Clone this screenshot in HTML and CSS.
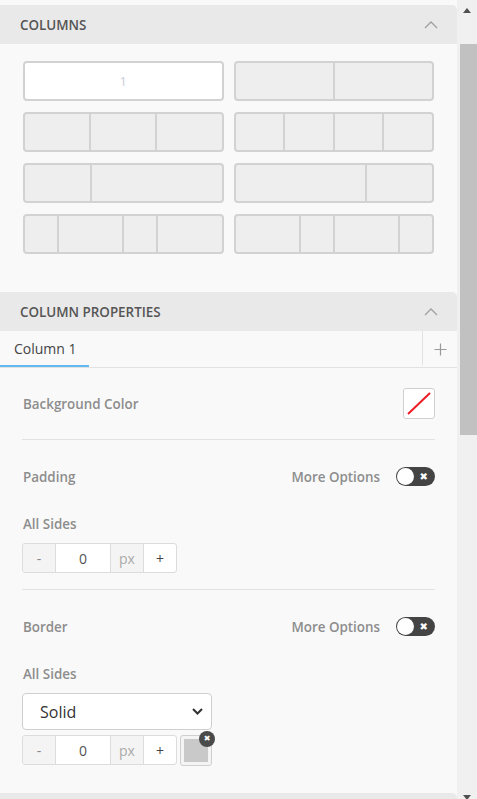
FILE: index.html
```html
<!DOCTYPE html>
<html>
<head>
<meta charset="utf-8">
<link rel="stylesheet" href="styles.css">
</head>
<body>
<div class="panel">
  <div class="sec-head">
    <span>COLUMNS</span>
    <svg class="chev" width="14" height="8" viewBox="0 0 14 8"><polyline points="1,7 7,1 13,7" fill="none" stroke="#a0a0a0" stroke-width="1.3"/></svg>
  </div>
  <div class="layouts">
    <div class="lay lay-one"><div class="cell" style="flex:1">1</div></div>
    <div class="lay"><div class="cell" style="flex:1"></div><div class="cell" style="flex:1"></div></div>
    <div class="lay"><div class="cell" style="flex:1"></div><div class="cell" style="flex:1"></div><div class="cell" style="flex:1"></div></div>
    <div class="lay"><div class="cell" style="flex:1"></div><div class="cell" style="flex:1"></div><div class="cell" style="flex:1"></div><div class="cell" style="flex:1"></div></div>
    <div class="lay"><div class="cell" style="flex:1"></div><div class="cell" style="flex:2"></div></div>
    <div class="lay"><div class="cell" style="flex:2"></div><div class="cell" style="flex:1"></div></div>
    <div class="lay"><div class="cell" style="flex:1"></div><div class="cell" style="flex:2"></div><div class="cell" style="flex:1"></div><div class="cell" style="flex:2"></div></div>
    <div class="lay"><div class="cell" style="flex:2"></div><div class="cell" style="flex:1"></div><div class="cell" style="flex:2"></div><div class="cell" style="flex:1"></div></div>
  </div>

  <div class="sec-head">
    <span>COLUMN PROPERTIES</span>
    <svg class="chev" width="14" height="8" viewBox="0 0 14 8"><polyline points="1,7 7,1 13,7" fill="none" stroke="#a0a0a0" stroke-width="1.3"/></svg>
  </div>
  <div class="tabs">
    <div class="tab active">Column 1</div>
    <div class="tab-fill"></div>
    <div class="tab-add">
      <svg width="13" height="13" viewBox="0 0 13 13"><path d="M6.5 0.5v12M0.5 6.5h12" stroke="#9a9a9a" stroke-width="1.2" fill="none"/></svg>
    </div>
  </div>

  <div class="props">
    <div class="row bg-row">
      <span class="label">Background Color</span>
      <div class="swatch-none">
        <svg width="30" height="29" viewBox="0 0 30 29"><line x1="4" y1="25" x2="26" y2="4" stroke="#ec1c24" stroke-width="2"/></svg>
      </div>
    </div>

    <div class="group">
      <div class="row head-row">
        <span class="label">Padding</span>
        <div class="more">
          <span class="label">More Options</span>
          <div class="toggle"><span class="knob"></span><span class="tx">&#x2716;</span></div>
        </div>
      </div>
      <div class="sub-label label">All Sides</div>
      <div class="numrow">
        <div class="num">
          <div class="nb minus">-</div>
          <div class="nv">0</div>
          <div class="nb unit">px</div>
          <div class="nb plus">+</div>
        </div>
      </div>
    </div>

    <div class="group last">
      <div class="row head-row">
        <span class="label">Border</span>
        <div class="more">
          <span class="label">More Options</span>
          <div class="toggle"><span class="knob"></span><span class="tx">&#x2716;</span></div>
        </div>
      </div>
      <div class="sub-label label">All Sides</div>
      <div class="select">
        <span>Solid</span>
        <svg width="11" height="7" viewBox="0 0 11 7"><polyline points="1,1 5.5,5.5 10,1" fill="none" stroke="#333" stroke-width="2"/></svg>
      </div>
      <div class="numrow tight">
        <div class="num">
          <div class="nb minus">-</div>
          <div class="nv">0</div>
          <div class="nb unit">px</div>
          <div class="nb plus">+</div>
        </div>
        <div class="color-sw">
          <div class="inner"></div>
          <div class="badge">&#x2716;</div>
        </div>
      </div>
    </div>
  </div>
  <div class="sec-head bottom"></div>
</div>
<div class="scrollbar">
  <div class="arrow up"></div>
  <div class="thumb"></div>
  <div class="track"></div>
  <div class="arrow down"></div>
</div>
</body>
</html>
```

FILE: styles.css
```css
html, body {
  margin: 0;
  padding: 0;
  height: 799px;
  overflow: hidden;
}
body {
  display: flex;
  font-family: "Open Sans", "Noto Sans", sans-serif;
  background: #f9f9f9;
}
.panel {
  width: 457px;
  flex: none;
  background: #f9f9f9;
  padding-top: 5px;
  box-sizing: border-box;
  height: 799px;
  overflow: hidden;
}
.sec-head {
  height: 39px;
  background: #e9e9e9;
  border-top-right-radius: 5px;
  display: flex;
  align-items: center;
  justify-content: space-between;
  padding: 0 19px 0 20px;
  font-size: 13.4px;
  font-weight: 600;
  color: #555;
}
.sec-head .chev { margin-top: 1px; }
.sec-head.bottom { height: 10px; }

.layouts {
  display: grid;
  grid-template-columns: 1fr 1fr;
  column-gap: 10px;
  row-gap: 11px;
  padding: 17px 23px 38px 23px;
}
.lay {
  height: 40px;
  box-sizing: border-box;
  border: 2px solid #d2d2d2;
  border-radius: 4px;
  background: #eeeeee;
  display: flex;
  overflow: hidden;
}
.cell {
  border-left: 2px solid #d2d2d2;
}
.cell:first-child { border-left: none; }
.lay-one { background: #fff; }
.lay-one .cell {
  display: flex;
  align-items: center;
  justify-content: center;
  color: #c9cdd6;
  font-size: 13px;
}

.tabs {
  display: flex;
  height: 36px;
  border-bottom: 1px solid #e2e2e2;
  background: #f9f9f9;
}
.tab {
  width: 89px;
  box-sizing: border-box;
  padding-left: 14px;
  display: flex;
  align-items: center;
  font-size: 14px;
  color: #444;
}
.tab.active { border-bottom: 2px solid #62b9f0; }
.tab-fill { flex: 1; }
.tab-add {
  width: 34px;
  border-left: 1px solid #e2e2e2;
  margin-bottom: 2px;
  display: flex;
  align-items: center;
  justify-content: center;
  padding-top: 2px;
}

.props { padding: 0 22px; }
.label {
  font-size: 13.4px;
  font-weight: 600;
  color: #8d8d8d;
}
.row {
  display: flex;
  align-items: center;
  justify-content: space-between;
}
.bg-row {
  padding: 20px 0 20px 1px;
  border-bottom: 1px solid #e2e2e2;
}
.swatch-none {
  width: 32px;
  height: 31px;
  box-sizing: border-box;
  border: 1px solid #cfcfcf;
  border-radius: 3px;
  background: #fff;
  display: flex;
}
.group {
  padding: 27px 0 16px 1px;
  border-bottom: 1px solid #e2e2e2;
}
.group.last { border-bottom: none; padding-bottom: 27px; }
.head-row { height: 19px; }
.more { display: flex; align-items: center; gap: 16px; }
.toggle {
  width: 39px;
  height: 19px;
  border-radius: 10px;
  background: #444;
  position: relative;
  box-sizing: border-box;
}
.toggle .knob {
  position: absolute;
  left: 1px;
  top: 1px;
  width: 17px;
  height: 17px;
  border-radius: 50%;
  background: #fff;
}
.toggle .tx {
  position: absolute;
  right: 7px;
  top: 0;
  line-height: 19px;
  font-size: 10px;
  color: #fff;
  font-family: "DejaVu Sans", sans-serif;
}
.sub-label {
  margin-top: 28px;
  line-height: 20px;
}
.numrow {
  margin-top: 9px;
  margin-left: -1px;
  display: flex;
  align-items: flex-start;
  gap: 3px;
}
.numrow.tight { margin-top: 5px; }
.num {
  display: flex;
  height: 30px;
  box-sizing: border-box;
  border: 1px solid #dcdcdc;
  border-radius: 3px;
  overflow: hidden;
  background: #fff;
}
.num > div {
  display: flex;
  align-items: center;
  justify-content: center;
  font-size: 14px;
  border-left: 1px solid #dcdcdc;
}
.num > div:first-child { border-left: none; }
.nb.minus { width: 32px; background: #f4f4f4; color: #888; }
.nv { width: 54px; color: #555; }
.nb.unit { width: 32px; background: #f4f4f4; color: #aaa; }
.nb.plus { width: 32px; color: #444; }
.select {
  margin-top: 9px;
  margin-left: -1px;
  width: 190px;
  height: 37px;
  box-sizing: border-box;
  border: 1px solid #cfcfcf;
  border-radius: 4px;
  background: #fff;
  display: flex;
  align-items: center;
  justify-content: space-between;
  padding: 0 8px 0 17px;
  font-size: 16px;
  color: #333;
}
.color-sw {
  width: 32px;
  height: 31px;
  box-sizing: border-box;
  border: 1px solid #d0d0d0;
  border-radius: 3px;
  background: #f4f4f4;
  padding: 3px;
  position: relative;
}
.color-sw .inner {
  width: 100%;
  height: 100%;
  background: #c9c9c9;
}
.badge {
  position: absolute;
  right: -4px;
  top: -5px;
  width: 16px;
  height: 16px;
  border-radius: 50%;
  background: #4a4a4a;
  color: #fff;
  font-size: 8px;
  line-height: 16px;
  text-align: center;
  font-family: "DejaVu Sans", sans-serif;
}

.scrollbar {
  width: 20px;
  flex: none;
  background: #f0f0f0;
  display: flex;
  flex-direction: column;
  align-items: center;
  height: 799px;
}
.arrow { width: 0; height: 0; flex: none; }
.arrow.up {
  margin-top: 8px;
  border-left: 4px solid transparent;
  border-right: 4px solid transparent;
  border-bottom: 5px solid #505050;
  margin-bottom: 31px;
}
.thumb {
  width: 17px;
  height: 391px;
  background: #c1c1c1;
  flex: none;
  margin-left: 2px;
}
.track { flex: 1; }
.arrow.down {
  border-left: 4px solid transparent;
  border-right: 4px solid transparent;
  border-top: 5px solid #505050;
  margin-bottom: -1px;
}
```
